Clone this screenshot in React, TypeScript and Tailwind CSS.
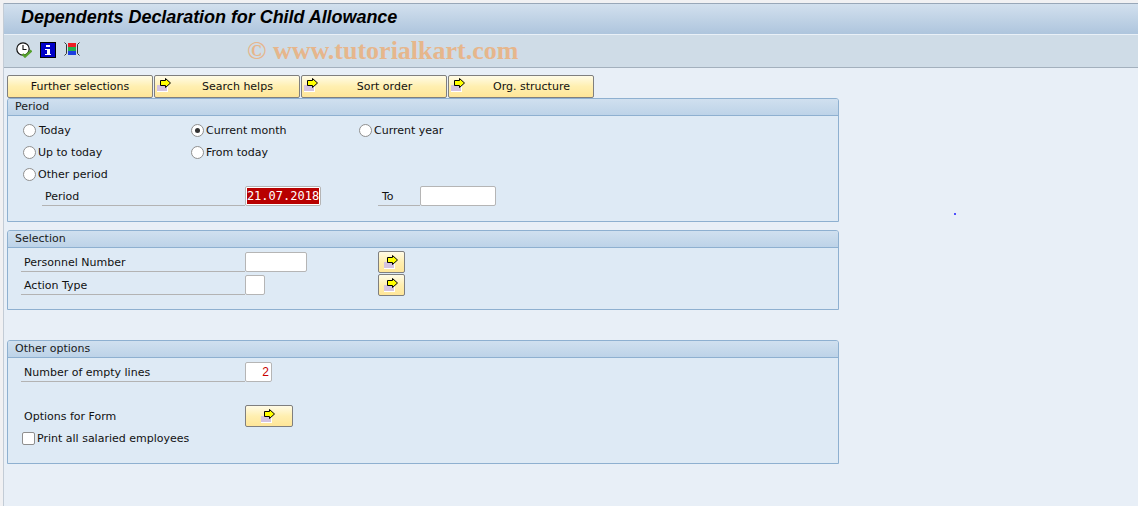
import React from "react";

const font = "font-['DejaVu_Sans','Noto_Sans',sans-serif]";

function ArrowIcon() {
  return (
    <svg width="16" height="16" viewBox="0 0 16 16" className="block shrink-0">
      <rect x="0" y="8" width="11" height="7" fill="#ffffff" shapeRendering="crispEdges" />
      <rect x="0" y="8" width="10" height="6" fill="#d4c3e0" shapeRendering="crispEdges" />
      <path d="M3.5 3.5H8.5V1.5L13.5 6L8.5 10.5V8.5H3.5Z" fill="#ffff00" stroke="#000000" strokeWidth="1" />
    </svg>
  );
}

function TopButton({ label, icon, textPl }: { label: string; icon?: boolean; textPl: string }) {
  return (
    <div className="relative flex h-[23px] w-[146px] items-center justify-center rounded-[2px] border border-[#7f7f7f] bg-gradient-to-b from-[#fffbe6] via-[#ffefb0] to-[#ffe698] text-[11px] leading-none text-[#111]">
      {icon && (
        <span className="absolute left-[2px] top-[1px]">
          <ArrowIcon />
        </span>
      )}
      <span className={textPl}>{label}</span>
    </div>
  );
}

function IconButton({ w, h }: { w: string; h: string }) {
  return (
    <div className={`flex items-center justify-center rounded-[2px] border border-[#7f7f7f] bg-gradient-to-b from-[#fffbe6] via-[#ffefb0] to-[#ffe698] ${w} ${h}`}>
      <ArrowIcon />
    </div>
  );
}

function Section({ title, h, children }: { title: string; h: string; children: React.ReactNode }) {
  return (
    <section className={`w-[832px] overflow-hidden rounded-t-[3px] border border-[#8eb0d0] bg-[#deeaf5] ${h}`}>
      <div className="flex h-[17px] items-center border-b border-[#8eb0d0] bg-gradient-to-b from-[#d0e0ef] to-[#bdd3e8] pb-[2px] pl-[7px] text-[11px] leading-none text-[#1a1a1a]">
        {title}
      </div>
      {children}
    </section>
  );
}

function Radio({ label, checked, w, gap }: { label: string; checked?: boolean; w: string; gap: string }) {
  return (
    <div className={`flex h-[22px] items-center ${w}`}>
      <span className={`flex h-[13px] w-[13px] shrink-0 items-center justify-center rounded-full border border-[#8f8f8f] bg-white ${gap}`}>
        {checked && <span className="h-[5px] w-[5px] rounded-full bg-[#333]" />}
      </span>
      <span className="text-[11px] leading-none text-[#111]">{label}</span>
    </div>
  );
}

function Field({ w, h = "h-[20px]", children, right }: { w: string; h?: string; children?: React.ReactNode; right?: boolean }) {
  return (
    <div className={`flex ${w} ${h} shrink-0 items-center ${right ? "justify-end pr-[2px]" : ""} rounded-[2px] border border-[#b5b5b5] bg-white`}>
      {children}
    </div>
  );
}

function Label({ text, w, pl }: { text: string; w: string; pl: string }) {
  return (
    <div className={`flex h-[20px] items-center border-b border-[#b3b3b3] pt-[2px] text-[11px] leading-none text-[#111] ${w} ${pl}`}>
      {text}
    </div>
  );
}

export default function App() {
  return (
    <div className={`${font} h-[506px] w-[1138px] overflow-hidden bg-[#f1f1f3] pt-[3px] pl-[3px]`}>
      <div className="relative h-[503px] w-[1135px] border-l border-[#c3ccd6] bg-[#e8eff7]">
        <header className="flex h-[32px] items-center border-t border-[#98a7b8] border-b border-b-[#e9f0f7] bg-gradient-to-b from-[#d2e0ee] to-[#aec5dd] pb-[5px] pl-[17px]">
          <h1 className="font-['Liberation_Sans',sans-serif] text-[18px] font-bold italic leading-none tracking-[-0.05px] text-[#000]">
            Dependents Declaration for Child Allowance
          </h1>
        </header>
        <div className="flex h-[33px] items-center border-b border-[#a3b0bd] bg-[#cfdce7] pl-[12px]">
          <div className="flex w-[231px] items-center gap-[8px] pb-[3px]">
            <svg width="16" height="16" viewBox="0 0 16 16">
              <circle cx="7" cy="7" r="6.2" fill="#fff" stroke="#111" strokeWidth="1.2" />
              <path d="M7 3V7.5H10.5" fill="none" stroke="#111" strokeWidth="1.1" />
              <path d="M6.5 12L9 14.5L15.5 8.5" fill="none" stroke="#55a02c" strokeWidth="2.4" />
            </svg>
            <svg width="16" height="16" viewBox="0 0 16 16" shapeRendering="crispEdges">
              <rect x="0.5" y="0.5" width="15" height="15" fill="#0000c8" stroke="#000" />
              <rect x="6" y="3" width="4" height="2" fill="#fff" />
              <path d="M5 6.5H10V11.5H11V13H5V11.5H6.5V8H5Z" fill="#fff" />
            </svg>
            <svg width="16" height="16" viewBox="0 0 16 16">
              <rect x="4" y="1" width="8" height="4" fill="#ee1c24" shapeRendering="crispEdges" />
              <rect x="4" y="5" width="8" height="4" fill="#22b14c" shapeRendering="crispEdges" />
              <rect x="4" y="9" width="8" height="4" fill="#1c3fe0" shapeRendering="crispEdges" />
              <path d="M0.5 0.5L2.5 2.5V11.5L0.5 13.5M15.5 0.5L13.5 2.5V11.5L15.5 13.5" fill="none" stroke="#222" strokeWidth="0.9" />
            </svg>
          </div>
          <span className="font-['Liberation_Serif',serif] text-[26px] font-bold leading-none text-[#e6b68c]">
            © www.tutorialkart.com
          </span>
        </div>

        <div className="flex flex-col pl-[3px] pt-[7px]">
          <div className="flex gap-[1px]">
            <TopButton label="Further selections" textPl="pl-0" />
            <TopButton label="Search helps" icon textPl="pl-[21px]" />
            <TopButton label="Sort order" icon textPl="pl-[21px]" />
            <TopButton label="Org. structure" icon textPl="pl-[21px]" />
          </div>

          <Section title="Period" h="h-[124px]">
            <div className="flex flex-col pl-[15px] pt-[3px]">
              <div className="flex">
                <Radio label="Today" w="w-[168px]" gap="mr-[3px]" />
                <Radio label="Current month" checked w="w-[168px]" gap="mr-[2px]" />
                <Radio label="Current year" w="w-[168px]" gap="mr-[2px]" />
              </div>
              <div className="flex">
                <Radio label="Up to today" w="w-[168px]" gap="mr-[2px]" />
                <Radio label="From today" w="w-[168px]" gap="mr-[2px]" />
              </div>
              <Radio label="Other period" w="w-[168px]" gap="mr-[2px]" />
              <div className="ml-[19px] mt-[1px] flex items-start">
                <Label text="Period" w="w-[203px]" pl="pl-[3px]" />
                <Field w="w-[76px]">
                  <span className="mx-[1px] flex h-[16px] w-[72px] items-center justify-center bg-[#b80000] font-['DejaVu_Sans_Mono',monospace] text-[12px] leading-none text-white">
                    21.07.2018
                  </span>
                </Field>
                <Label text="To" w="w-[42px] ml-[57px]" pl="pl-[4px]" />
                <Field w="w-[76px]" />
              </div>
            </div>
          </Section>

          <div className="mt-[8px]">
            <Section title="Selection" h="h-[80px]">
              <div className="flex flex-col gap-[2px] pl-[13px] pt-[4px]">
                <div className="flex items-start">
                  <Label text="Personnel Number" w="w-[224px]" pl="pl-[3px]" />
                  <Field w="w-[62px]" />
                  <div className="-mt-[1px] ml-[71px]">
                    <IconButton w="w-[27px]" h="h-[22px]" />
                  </div>
                </div>
                <div className="flex items-start">
                  <Label text="Action Type" w="w-[224px]" pl="pl-[3px]" />
                  <Field w="w-[20px]" />
                  <div className="-mt-[1px] ml-[113px]">
                    <IconButton w="w-[27px]" h="h-[22px]" />
                  </div>
                </div>
              </div>
            </Section>
          </div>

          <div className="mt-[30px]">
            <Section title="Other options" h="h-[124px]">
              <div className="flex flex-col pl-[13px] pt-[4px]">
                <div className="flex items-start">
                  <Label text="Number of empty lines" w="w-[224px]" pl="pl-[3px]" />
                  <Field w="w-[27px]" right>
                    <span className="font-['Liberation_Sans',sans-serif] text-[12px] leading-none text-[#c80000]">2</span>
                  </Field>
                </div>
                <div className="mt-[23px] flex items-center">
                  <span className="w-[224px] pl-[3px] text-[11px] leading-none text-[#111]">Options for Form</span>
                  <IconButton w="w-[48px]" h="h-[22px]" />
                </div>
                <div className="ml-[1px] mt-[1px] flex h-[20px] items-center">
                  <span className="mr-[2px] h-[13px] w-[13px] rounded-[2px] border border-[#8f8f8f] bg-white" />
                  <span className="text-[11px] leading-none text-[#111]">Print all salaried employees</span>
                </div>
              </div>
            </Section>
          </div>
        </div>
        <span className="absolute left-[950px] top-[210px] h-[2px] w-[2px] rounded-full bg-[#1a1aff]" />
      </div>
    </div>
  );
}
